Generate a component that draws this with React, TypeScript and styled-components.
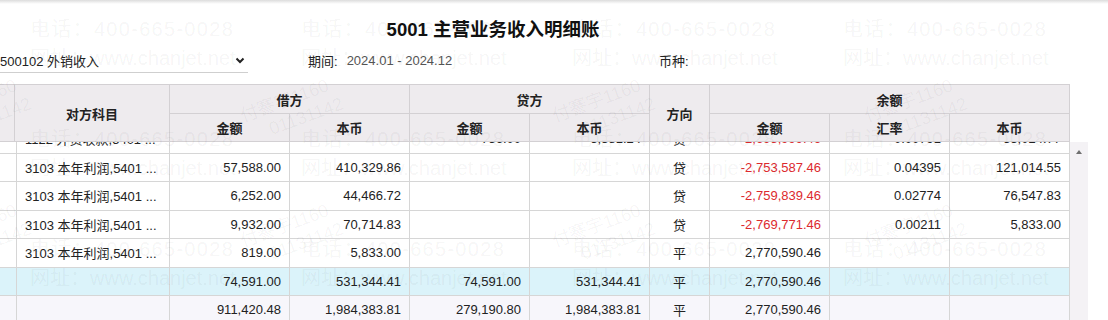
import React from "react";
import styled, { createGlobalStyle } from "styled-components";

const GlobalStyle = createGlobalStyle`
  html, body { margin: 0; padding: 0; background: #fff; }
  body {
    font-family: "Liberation Sans", "Noto Sans CJK SC", sans-serif;
    color: #222;
  }
  * { box-sizing: border-box; }
`;

const COLS = "15px 155px 120px 120px 120px 120px 60px 120px 120px 120px";
const HEAD_LINE = "#d3d0d3";
const BODY_LINE = "#d6d6d6";

const Page = styled.div`
  position: relative;
  width: 1108px;
  height: 320px;
  overflow: hidden;
  display: flex;
  flex-direction: column;
  background: #fff;
`;

const TopShade = styled.div`
  flex: none;
  height: 4px;
  background: linear-gradient(#dcdcdc, #eeeeee 50%, #ffffff);
`;

const TitleRow = styled.div`
  flex: none;
  display: flex;
  justify-content: center;
  padding: 14px 122px 0 0;
`;

const Title = styled.h1`
  margin: 0;
  font-size: 18.5px;
  line-height: 24px;
  font-weight: bold;
  color: #111;
`;

const FilterRow = styled.div`
  flex: none;
  display: flex;
  align-items: center;
  height: 25px;
  margin-top: 6px;
  font-size: 13px;
`;

const SelectBox = styled.div`
  width: 248px;
  height: 25px;
  display: flex;
  align-items: center;
  justify-content: space-between;
  padding-right: 3px;
  border-bottom: 1px solid #cfcfcf;
  color: #222;
`;

const Field = styled.div<{ $width?: number }>`
  display: flex;
  align-items: center;
  gap: 9px;
  width: ${(p) => (p.$width ? `${p.$width}px` : "auto")};
`;

const Label = styled.span`
  color: #222;
`;

const Value = styled.span`
  color: #555;
`;

const PeriodField = styled(Field)`
  margin-left: 60px;
`;

const TableArea = styled.div`
  flex: 1;
  min-height: 0;
  margin-top: 11px;
  display: flex;
  flex-direction: column;
`;

const Header = styled.div`
  flex: none;
  width: 1070px;
  display: grid;
  grid-template-columns: ${COLS};
  grid-template-rows: 29px 28px;
  border-top: 1px solid ${HEAD_LINE};
  background: #eeebee;
`;

const HeadCell = styled.div<{ $col: string; $row: string }>`
  grid-column: ${(p) => p.$col};
  grid-row: ${(p) => p.$row};
  display: flex;
  align-items: center;
  justify-content: center;
  border-right: 1px solid ${HEAD_LINE};
  border-bottom: 1px solid ${HEAD_LINE};
  font-size: 13px;
  font-weight: bold;
  color: #222;
`;

const BodyWrap = styled.div`
  flex: 1;
  min-height: 0;
  display: flex;
`;

const Viewport = styled.div`
  width: 1070px;
  height: 100%;
  overflow: hidden;
`;

const Track = styled.div`
  width: 18px;
  height: 100%;
  background: #f4f2f5;
  display: flex;
  justify-content: center;
  padding-top: 8px;
`;

const ArrowUp = styled.div`
  width: 0;
  height: 0;
  border-left: 3.5px solid transparent;
  border-right: 3.5px solid transparent;
  border-bottom: 4px solid #6f6f6f;
`;

const Row = styled.div<{ $bg?: string }>`
  display: grid;
  grid-template-columns: ${COLS};
  height: 28.5px;
  background: ${(p) => p.$bg || "#fff"};
`;

const Cell = styled.div<{ $align?: "left" | "right" | "center"; $red?: boolean }>`
  display: flex;
  align-items: center;
  justify-content: ${(p) =>
    p.$align === "left" ? "flex-start" : p.$align === "center" ? "center" : "flex-end"};
  padding: ${(p) => (p.$align === "left" ? "0 6px 0 10px" : "0 8px")};
  border-right: 1px solid ${BODY_LINE};
  border-bottom: 1px solid ${BODY_LINE};
  font-size: 13px;
  white-space: nowrap;
  overflow: hidden;
  color: ${(p) => (p.$red ? "#dc2a2e" : "#222")};
`;

const MarkLayer = styled.div`
  position: absolute;
  left: 0;
  top: 0;
  width: 1108px;
  height: 320px;
  pointer-events: none;
  display: grid;
  grid-template-columns: repeat(4, 271px);
  grid-auto-rows: 110px;
  padding: 15px 0 0 30px;
`;

const MarkTile = styled.div`
  display: flex;
  flex-direction: column;
`;

const MarkLine = styled.div<{ $spacing: number }>`
  font-size: 20px;
  line-height: 29px;
  white-space: nowrap;
  letter-spacing: ${(p) => p.$spacing}px;
  color: rgba(0, 0, 0, 0.05);
`;

const TiltLayer = styled.div`
  position: absolute;
  left: -180px;
  top: 48px;
  pointer-events: none;
  display: grid;
  grid-template-columns: repeat(5, 312px);
  grid-auto-rows: 125px;
`;

const TiltTile = styled.div`
  display: flex;
  flex-direction: column;
  align-items: center;
  justify-content: center;
  transform: rotate(-20deg);
`;

const TiltLine = styled.div<{ $shift?: number }>`
  font-size: 18px;
  line-height: 22px;
  white-space: nowrap;
  color: rgba(0, 0, 0, 0.045);
  margin-left: ${(p) => p.$shift || 0}px;
`;

type RowData = {
  name: string;
  dAmt: string;
  dBase: string;
  cAmt: string;
  cBase: string;
  dir: string;
  bal: string;
  red?: boolean;
  rate: string;
  base: string;
  bg?: string;
};

const rows: RowData[] = [
  { name: "1122 外贸收款,5401 ...", dAmt: "", dBase: "", cAmt: "756.00", cBase: "5,381.24", dir: "贷", bal: "-2,695,999.46", red: true, rate: "0.00791", base: "55,024.77" },
  { name: "3103 本年利润,5401 ...", dAmt: "57,588.00", dBase: "410,329.86", cAmt: "", cBase: "", dir: "贷", bal: "-2,753,587.46", red: true, rate: "0.04395", base: "121,014.55" },
  { name: "3103 本年利润,5401 ...", dAmt: "6,252.00", dBase: "44,466.72", cAmt: "", cBase: "", dir: "贷", bal: "-2,759,839.46", red: true, rate: "0.02774", base: "76,547.83" },
  { name: "3103 本年利润,5401 ...", dAmt: "9,932.00", dBase: "70,714.83", cAmt: "", cBase: "", dir: "贷", bal: "-2,769,771.46", red: true, rate: "0.00211", base: "5,833.00" },
  { name: "3103 本年利润,5401 ...", dAmt: "819.00", dBase: "5,833.00", cAmt: "", cBase: "", dir: "平", bal: "2,770,590.46", rate: "", base: "" },
  { name: "", dAmt: "74,591.00", dBase: "531,344.41", cAmt: "74,591.00", cBase: "531,344.41", dir: "平", bal: "2,770,590.46", rate: "", base: "", bg: "#dbf3fa" },
  { name: "", dAmt: "911,420.48", dBase: "1,984,383.81", cAmt: "279,190.80", cBase: "1,984,383.81", dir: "平", bal: "2,770,590.46", rate: "", base: "", bg: "#f7f6fb" },
];

const Chevron = () => (
  <svg width="10" height="7" viewBox="0 0 10 7" aria-hidden="true">
    <polyline points="1.5,1.5 5,5 8.5,1.5" fill="none" stroke="#222" strokeWidth="2" />
  </svg>
);

export default function App() {
  const scrollRef = (el: HTMLDivElement | null) => {
    if (el) el.scrollTop = 17;
  };

  return (
    <>
      <GlobalStyle />
      <Page>
        <TopShade />
        <TitleRow>
          <Title>5001 主营业务收入明细账</Title>
        </TitleRow>
        <FilterRow>
          <SelectBox>
            <span>500102 外销收入</span>
            <Chevron />
          </SelectBox>
          <PeriodField $width={351}>
            <Label>期间:</Label>
            <Value>2024.01 - 2024.12</Value>
          </PeriodField>
          <Field>
            <Label>币种:</Label>
          </Field>
        </FilterRow>
        <TableArea>
          <Header>
            <HeadCell $col="1" $row="1 / span 2" />
            <HeadCell $col="2" $row="1 / span 2">对方科目</HeadCell>
            <HeadCell $col="3 / span 2" $row="1">借方</HeadCell>
            <HeadCell $col="3" $row="2">金额</HeadCell>
            <HeadCell $col="4" $row="2">本币</HeadCell>
            <HeadCell $col="5 / span 2" $row="1">贷方</HeadCell>
            <HeadCell $col="5" $row="2">金额</HeadCell>
            <HeadCell $col="6" $row="2">本币</HeadCell>
            <HeadCell $col="7" $row="1 / span 2">方向</HeadCell>
            <HeadCell $col="8 / span 3" $row="1">余额</HeadCell>
            <HeadCell $col="8" $row="2">金额</HeadCell>
            <HeadCell $col="9" $row="2">汇率</HeadCell>
            <HeadCell $col="10" $row="2">本币</HeadCell>
          </Header>
          <BodyWrap>
            <Viewport ref={scrollRef}>
              {rows.map((r, i) => (
                <Row key={i} $bg={r.bg}>
                  <Cell />
                  <Cell $align="left">{r.name}</Cell>
                  <Cell>{r.dAmt}</Cell>
                  <Cell>{r.dBase}</Cell>
                  <Cell>{r.cAmt}</Cell>
                  <Cell>{r.cBase}</Cell>
                  <Cell $align="center">{r.dir}</Cell>
                  <Cell $red={r.red}>{r.bal}</Cell>
                  <Cell>{r.rate}</Cell>
                  <Cell>{r.base}</Cell>
                </Row>
              ))}
            </Viewport>
            <Track>
              <ArrowUp />
            </Track>
          </BodyWrap>
        </TableArea>

        <MarkLayer>
          {Array.from({ length: 12 }).map((_, i) => (
            <MarkTile key={i}>
              <MarkLine $spacing={1.3}>电话：400-665-0028</MarkLine>
              <MarkLine $spacing={0}>网址：www.chanjet.net</MarkLine>
            </MarkTile>
          ))}
        </MarkLayer>
        <TiltLayer>
          {Array.from({ length: 10 }).map((_, i) => (
            <TiltTile key={i}>
              <TiltLine>付謇宇1160</TiltLine>
              <TiltLine $shift={30}>01131142</TiltLine>
            </TiltTile>
          ))}
        </TiltLayer>
      </Page>
    </>
  );
}
